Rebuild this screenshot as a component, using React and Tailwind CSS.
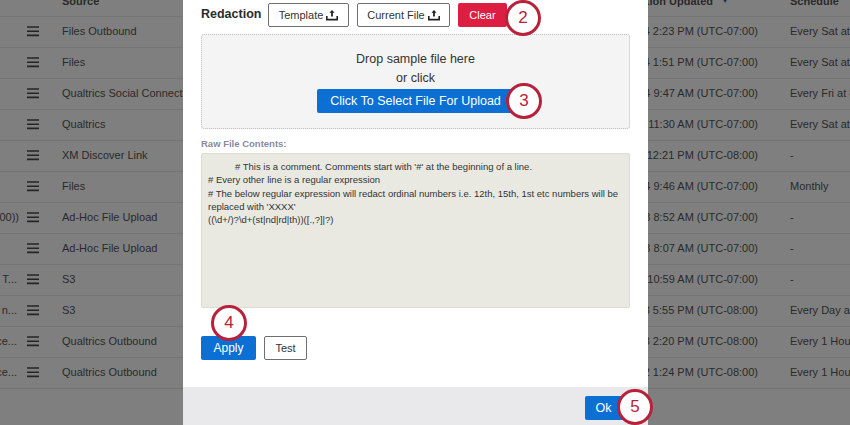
const rows = [
  ["", "Files Outbound", "4 2:23 PM (UTC-07:00)", "Every Sat at 8:00 AM"],
  ["", "Files", "4 1:51 PM (UTC-07:00)", "Every Sat at 8:00 AM"],
  ["", "Qualtrics Social Connect", "4 9:47 AM (UTC-07:00)", "Every Fri at 8:00 AM"],
  ["", "Qualtrics", "4 11:30 AM (UTC-07:00)", "Every Sat at 8:00 AM"],
  ["", "XM Discover Link", "4 12:21 PM (UTC-08:00)", "-"],
  ["", "Files", "4 9:46 AM (UTC-07:00)", "Monthly"],
  [":00))", "Ad-Hoc File Upload", "3 8:52 AM (UTC-07:00)", "-"],
  ["", "Ad-Hoc File Upload", "3 8:07 AM (UTC-07:00)", "-"],
  ["T...", "S3", "3 10:59 AM (UTC-07:00)", "-"],
  ["n...", "S3", "3 5:55 PM (UTC-08:00)", "Every Day at 8:00 AM"],
  ["ce...", "Qualtrics Outbound", "3 2:20 PM (UTC-08:00)", "Every 1 Hour"],
  ["ce...", "Qualtrics Outbound", "2 1:24 PM (UTC-08:00)", "Every 1 Hour"],
];

function Burger() {
  return (
    <svg width="12" height="11" viewBox="0 0 12 11" className="shrink-0 text-[#4a4a4a]">
      <path d="M0 1h12M0 5.2h12M0 9.4h12" stroke="currentColor" strokeWidth="1.6" />
    </svg>
  );
}

function Upload() {
  return (
    <svg width="12" height="11" viewBox="0 0 12 11" className="ml-[3px] shrink-0">
      <path d="M6 0 L8.6 2.8 H6.9 V6.6 H5.1 V2.8 H3.4 Z" fill="#222" />
      <path d="M0.8 6 V9.6 H11.2 V6" fill="none" stroke="#222" strokeWidth="1.6" />
    </svg>
  );
}

function Marker({ n, className }) {
  return (
    <div
      className={`absolute flex h-[36px] w-[36px] items-center justify-center rounded-full border-[3px] border-[#b8213a] bg-white text-[17px] text-[#b8213a] ${className}`}
    >
      {n}
    </div>
  );
}

function OutlineBtn({ children, className = "" }) {
  return (
    <button className={`flex h-[24px] items-center justify-center rounded-[2px] border border-[#6f6f6f] bg-white text-[11px] text-[#333] ${className}`}>
      {children}
    </button>
  );
}

export default function App() {
  return (
    <div className="relative h-[425px] w-[850px] overflow-hidden bg-white font-['Liberation_Sans',Arial,sans-serif]">
      <div className="text-[11px] text-[#555]">
        <div className="flex h-[17px] border-b border-[#e8e8e8] font-bold leading-[14px]">
          <div className="ml-[62px] -mt-[6px] w-[564px]">Source</div>
          <div className="-mt-[6px] flex w-[164px] justify-end pr-[61px]">
            <span>ation Updated</span>
            <span className="ml-[8px] text-[8px] text-[#1b5fa8]">▼</span>
          </div>
          <div className="-mt-[6px]">Schedule</div>
        </div>
        {rows.map((r, i) => (
          <div key={i} className="flex h-[31px] items-center border-b border-[#e8e8e8] pb-[2px]">
            <div className={`flex w-[19px] shrink-0 justify-end overflow-hidden whitespace-nowrap ${r[0].endsWith("...") ? "pr-[2px]" : ""}`}>{r[0]}</div>
            <div className="ml-[8px] flex w-[35px] shrink-0"><Burger /></div>
            <div className="w-[300px] shrink-0 whitespace-nowrap">{r[1]}</div>
            <div className="w-[396px] shrink-0 whitespace-nowrap text-right">{r[2]}</div>
            <div className="ml-[32px] whitespace-nowrap">{r[3]}</div>
          </div>
        ))}
      </div>

      <div className="absolute inset-0 bg-black/50" />

      <div className="absolute left-[183px] top-0 flex h-[425px] w-[465px] flex-col bg-white">
        <div className="flex-1 pl-[18px] pr-[18px]">
          <div className="flex h-[34px] items-start pt-[3px]">
            <div className="w-[67px] pt-[2px] text-[12.5px] font-bold leading-[18px] text-[#2b2b2b]">Redaction</div>
            <OutlineBtn className="w-[81px]">Template<Upload /></OutlineBtn>
            <OutlineBtn className="ml-[8px] w-[93px]">Current File<Upload /></OutlineBtn>
            <button className="ml-[8px] h-[24px] w-[49px] rounded-[2px] bg-[#dc1e42] text-[11px] text-white">Clear</button>
          </div>

          <div className="flex h-[95px] w-[429px] flex-col items-center rounded-[3px] border border-dotted border-[#bdbdbd] bg-[#f4f4f4] pt-[15px] text-[12.5px] leading-[19px] text-[#333]">
            <div>Drop sample file here</div>
            <div>or click</div>
            <button className="mt-[1px] h-[24px] w-[197px] rounded-[2px] bg-[#0b6fd4] text-[12.5px] text-white">Click To Select File For Upload</button>
          </div>

          <div className="mt-[8px] text-[9.5px] font-bold leading-[13px] text-[#8a8a9e]">Raw File Contents:</div>
          <div className="mt-[3px] h-[155px] w-[429px] rounded-[2px] border border-[#dcdcd4] bg-[#e9e9e2] px-[6px] py-[6px] text-[9.5px] leading-[13.3px] text-[#333]">
            <div className="indent-[27px]">{"# This is a comment. Comments start with '#' at the beginning of a line."}</div>
            <div># Every other line is a regular expression</div>
            <div>{"# The below regular expression will redact ordinal numbers i.e. 12th, 15th, 1st etc numbers will be replaced with 'XXXX'"}</div>
            <div>{"((\\d+/)?\\d+(st|nd|rd|th))([.,?]|?)"}</div>
          </div>

          <div className="mt-[28px] flex gap-[8px]">
            <button className="h-[24px] w-[55px] rounded-[2px] bg-[#0b6fd4] text-[12px] text-white">Apply</button>
            <OutlineBtn className="w-[43px]">Test</OutlineBtn>
          </div>
        </div>
        <div className="flex h-[38px] items-start justify-end bg-[#e9e9eb] pr-[23px] pt-[9px]">
          <button className="h-[24px] w-[40px] rounded-[2px] bg-[#0b6fd4] pr-[3px] text-[12.5px] text-white">Ok</button>
        </div>
      </div>

      <Marker n="2" className="left-[505px] top-0" />
      <Marker n="3" className="left-[506px] top-[83px]" />
      <Marker n="4" className="left-[211px] top-[305px]" />
      <Marker n="5" className="left-[617px] top-[389px]" />
    </div>
  );
}
